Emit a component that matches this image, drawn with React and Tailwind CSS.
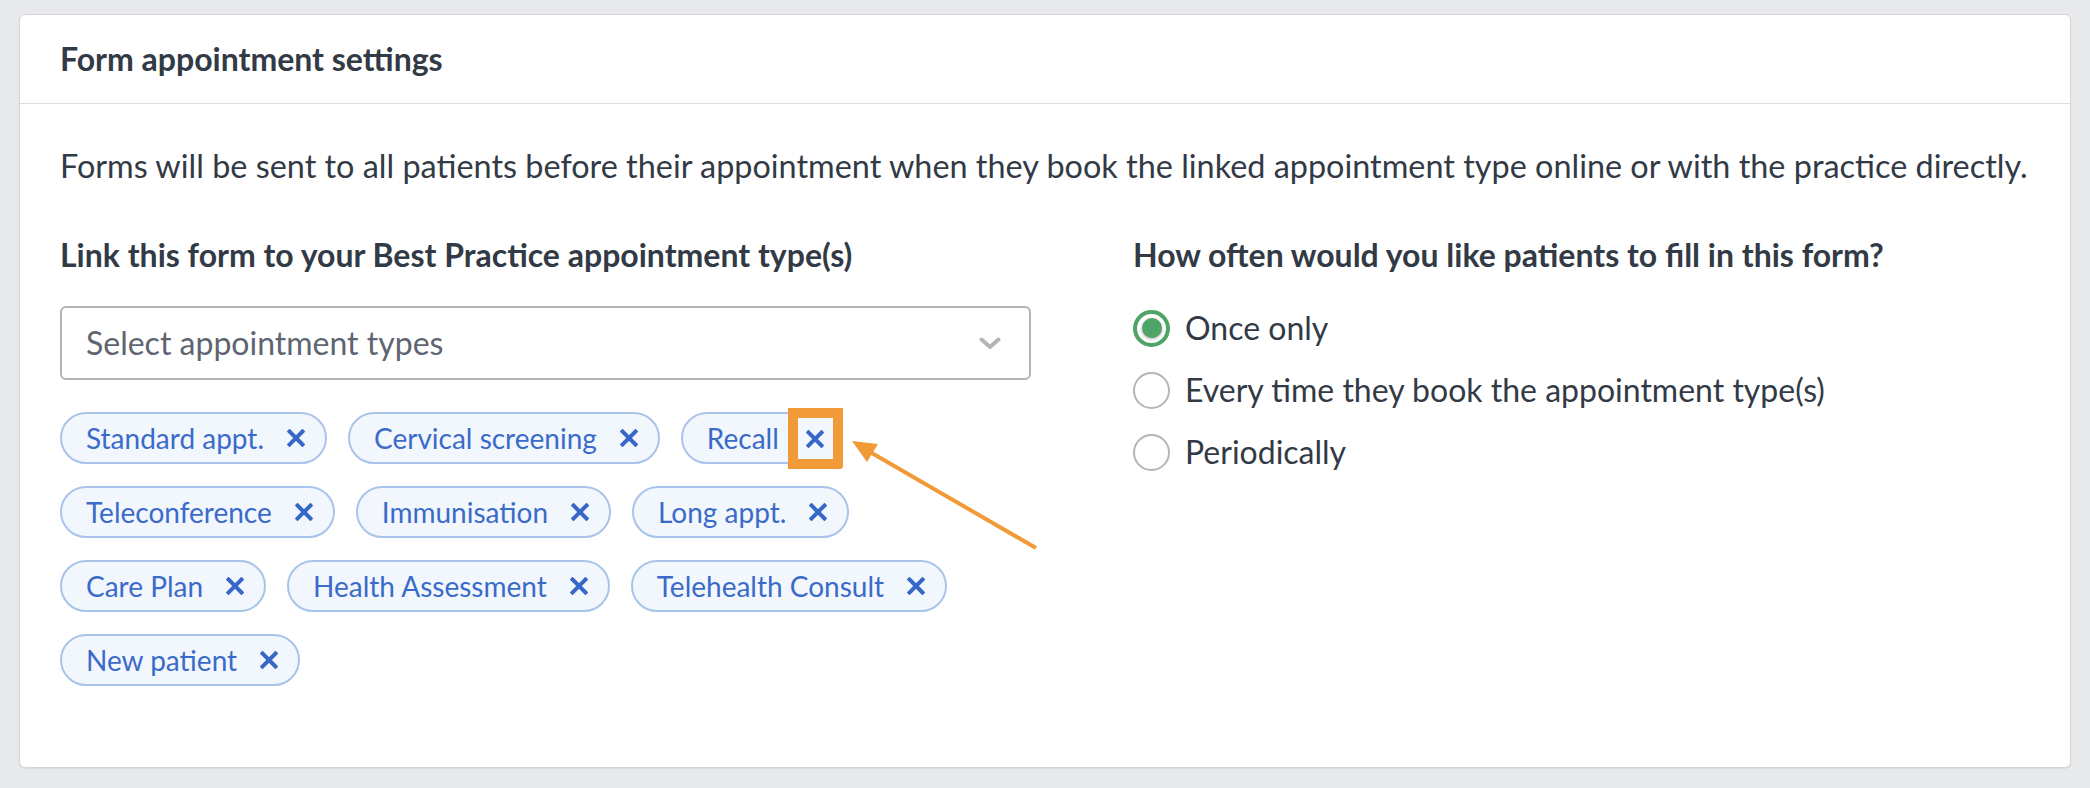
import React from "react";

const chips = [
  "Standard appt.",
  "Cervical screening",
  "Recall",
  "Teleconference",
  "Immunisation",
  "Long appt.",
  "Care Plan",
  "Health Assessment",
  "Telehealth Consult",
  "New patient",
];

function XIcon() {
  return (
    <svg width="18" height="18" viewBox="0 0 18 18" className="shrink-0">
      <path d="M2.5 2.5 L15.5 15.5 M15.5 2.5 L2.5 15.5" stroke="#3767c7" strokeWidth="4" strokeLinecap="square" fill="none" />
    </svg>
  );
}

function Chip({ label, highlight }) {
  return (
    <div className="relative flex h-[52px] items-center gap-[23px] rounded-full border-2 border-[#a9c4ea] bg-[#f2f6fd] pl-[24px] pr-[20px]">
      <span className="text-[28px] leading-none text-[#3a6bc9]">{label}</span>
      <XIcon />
      {highlight && (
        <div className="absolute right-[-3px] top-[-6px] flex h-[61px] w-[55px] items-center justify-center rounded-br-[3px] border-[10px] border-[#f09a38] bg-transparent">
          <div className="flex h-full w-full items-center justify-center bg-[#f2f6fd]">
            <XIcon />
          </div>
        </div>
      )}
    </div>
  );
}

function Radio({ label, checked }) {
  return (
    <div className="flex h-[36px] items-center gap-[15px]">
      {checked ? (
        <div className="flex h-[37px] w-[37px] shrink-0 items-center justify-center rounded-full border-[4px] border-[#4fa468] bg-white">
          <div className="h-[20px] w-[20px] rounded-full bg-[#4fa468] shadow-[0_1px_3px_rgba(0,0,0,0.35)]" />
        </div>
      ) : (
        <div className="h-[37px] w-[37px] shrink-0 rounded-full border-2 border-[#b4b5ba] bg-white" />
      )}
      <span className="text-[32px] leading-none text-[#323a46]">{label}</span>
    </div>
  );
}

export default function App() {
  return (
    <div className="relative min-h-screen bg-[#e8e9eb] px-[19px] pb-[21px] pt-[14px] font-['Lato',sans-serif]">
      <div className="h-[754px] rounded-[6px] border border-[#d3d4d7] bg-white shadow-[0_1px_1px_rgba(0,0,0,0.06)]">
        <div className="flex h-[89px] items-center border-b border-[#dcdde0] px-[40px]">
          <h2 className="text-[32px] font-bold leading-none text-[#323a46]">Form appointment settings</h2>
        </div>
        <div className="px-[40px] pt-[42px]">
          <p className="whitespace-nowrap text-[32.4px] leading-[40px] text-[#323a46]">
            Forms will be sent to all patients before their appointment when they book the linked appointment type online or with the practice directly.
          </p>
          <div className="mt-[49px] flex">
            <div className="w-[971px] shrink-0">
              <div className="text-[32px] font-bold leading-[40px] text-[#323a46]">
                Link this form to your Best Practice appointment type(s)
              </div>
              <div className="mt-[31px] flex h-[74px] items-center justify-between rounded-[6px] border-2 border-[#b1b3b8] pl-[24px] pr-[28px]">
                <span className="text-[32px] leading-none text-[#5e6570]">Select appointment types</span>
                <svg width="22" height="13" viewBox="0 0 22 13">
                  <path d="M2.5 2.5 L11 10 L19.5 2.5" stroke="#b3b5b9" strokeWidth="4" fill="none" strokeLinecap="round" strokeLinejoin="round" />
                </svg>
              </div>
              <div className="mt-[32px] flex flex-wrap gap-x-[21px] gap-y-[22px]">
                {chips.map((c) => (
                  <Chip key={c} label={c} highlight={c === "Recall"} />
                ))}
              </div>
            </div>
            <div className="ml-[102px]">
              <div className="whitespace-nowrap text-[32px] font-bold leading-[40px] text-[#323a46]">
                How often would you like patients to fill in this form?
              </div>
              <div className="mt-[35px] flex flex-col gap-[26px]">
                <Radio label="Once only" checked />
                <Radio label="Every time they book the appointment type(s)" />
                <Radio label="Periodically" />
              </div>
            </div>
          </div>
        </div>
      </div>
      <svg className="pointer-events-none absolute left-0 top-0" width="2090" height="788" viewBox="0 0 2090 788">
        <line x1="1036" y1="548" x2="870" y2="452" stroke="#f09a38" strokeWidth="4" />
        <polygon points="852,441 878,444 867,462" fill="#f09a38" />
      </svg>
    </div>
  );
}
